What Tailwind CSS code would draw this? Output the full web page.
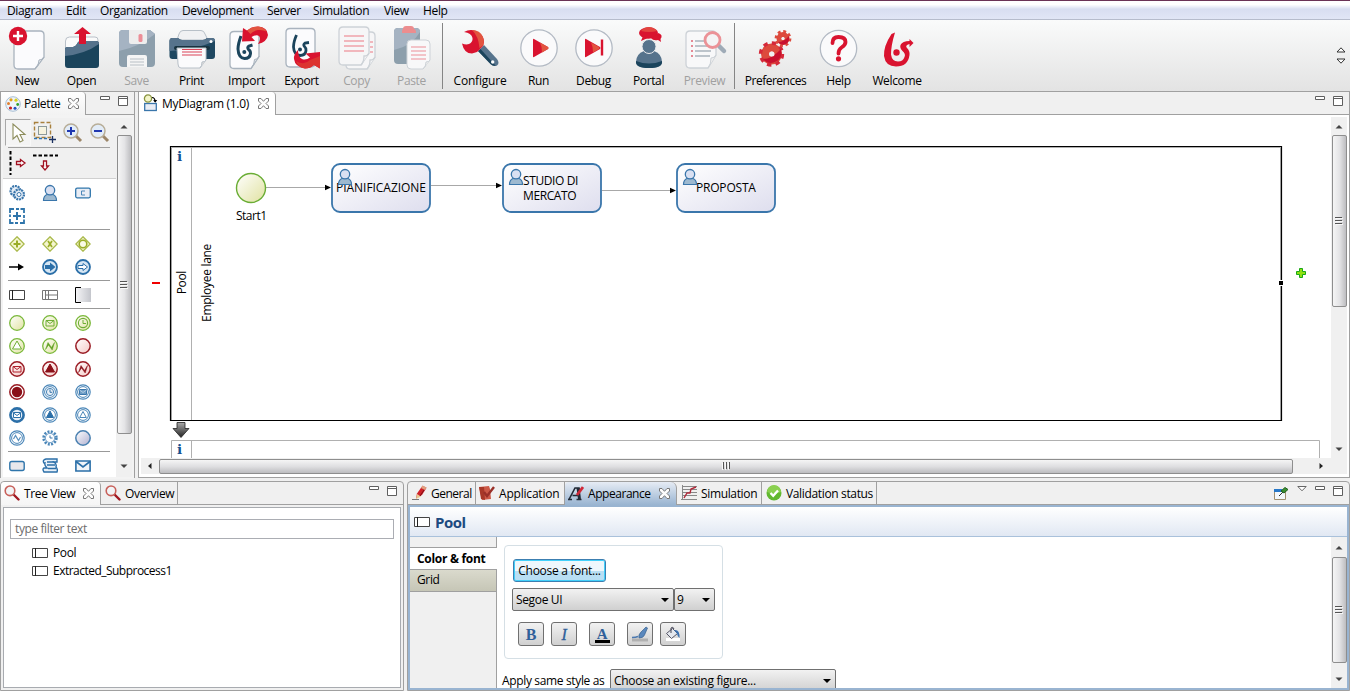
<!DOCTYPE html>
<html lang="en">
<head>
<meta charset="utf-8">
<title>MyDiagram (1.0)</title>
<script src="https://cdn.jsdelivr.net/npm/@tailwindcss/browser@4"></script>
</head>
<body class="w-[1350px] h-[691px] overflow-hidden bg-[#f0f0f0] text-black font-['Open_Sans','Noto_Sans',sans-serif] text-[12px] leading-4 tracking-[-0.35px] whitespace-nowrap">

<!-- shared symbols -->
<svg width="0" height="0" class="absolute">
  <defs>
    <linearGradient id="gTask" x1="0" y1="0" x2="1" y2="1"><stop offset="0" stop-color="#fff"/><stop offset="1" stop-color="#dedeee"/></linearGradient>
    <linearGradient id="gGreen" x1="0" y1="0" x2="1" y2="1"><stop offset="0" stop-color="#fff"/><stop offset="1" stop-color="#e0e2a0"/></linearGradient>
    <linearGradient id="gRed" x1="0" y1="0" x2="1" y2="1"><stop offset="0" stop-color="#fff"/><stop offset="1" stop-color="#f5c9c6"/></linearGradient>
    <linearGradient id="gBlue" x1="0" y1="0" x2="1" y2="1"><stop offset="0" stop-color="#fff"/><stop offset="1" stop-color="#b0b0d0"/></linearGradient>
    <linearGradient id="gGray" x1="0" y1="0" x2="1" y2="0"><stop offset="0" stop-color="#f4f4f6"/><stop offset="1" stop-color="#c4c6cc"/></linearGradient>
    <linearGradient id="gArrow" x1="0" y1="0" x2="0" y2="1"><stop offset="0" stop-color="#aaa"/><stop offset="1" stop-color="#222"/></linearGradient>
    <symbol id="close" viewBox="0 0 11 11"><path d="M.5 .5h2.500l2.500 2.800L8 .5h2.500V3L8 5.500 10.500 8v2.500H8L5.500 7.700 3 10.500H.5V8L3 5.500.5 3z" fill="#fdfdfd" stroke="#777"/></symbol>
    <symbol id="min" viewBox="0 0 10 4"><path d="M.5.5h9v3h-9z" fill="#fff" stroke="#5f5f5f"/></symbol>
    <symbol id="max" viewBox="0 0 10 10"><path d="M.5.5h9v9h-9zM.5 2.500h9" fill="#fff" stroke="#5f5f5f"/></symbol>
    <symbol id="mag" viewBox="0 0 16 16"><path d="M9.500 9.500l5 5" stroke="#a01822" stroke-width="2.400" stroke-linecap="round"/><circle cx="6" cy="5.800" r="4.800" fill="#f1f4f6" stroke="#c8605a" stroke-width="1.600"/></symbol>
    <symbol id="pool" viewBox="0 0 16 10"><path d="M.5.5h15v9H.5z" fill="#fff" stroke="#444"/><path d="M3.500 0v10" stroke="#222"/></symbol>
    <symbol id="user" viewBox="0 0 16 18"><path d="M1.500 16.500c0-3 1-5 3.500-6h6c2.500 1 3.500 3 3.500 6z" fill="#9db9d0" stroke="#3a76ab" stroke-width="1.200"/><circle cx="8" cy="6.200" r="4.700" fill="#d9e0f2" stroke="#3a76ab" stroke-width="1.300"/></symbol>
    <symbol id="up" viewBox="0 0 8 5"><path d="M.5 4.500L4 1l3.500 3.500z" fill="#444"/></symbol>
    <symbol id="down" viewBox="0 0 8 5"><path d="M.5.500L4 4 7.500.500z" fill="#444"/></symbol>
    <symbol id="grip" viewBox="0 0 8 8"><path d="M0 .5h7M0 3.500h7M0 6.500h7" stroke="#555"/><path d="M1 1.500h7M1 4.500h7M1 7.500h7" stroke="#fff" opacity=".8"/></symbol>
    <symbol id="caret" viewBox="0 0 8 4"><path d="M0 0h8L4 4z" fill="#000"/></symbol>
    <symbol id="env" viewBox="0 0 16 16"><path d="M4 5.500h8v5.500H4zM4 5.500l4 3 4-3" fill="none" stroke="currentColor"/></symbol>
    <symbol id="clk" viewBox="0 0 16 16"><circle cx="8" cy="8" r="4.600" fill="none" stroke="currentColor" stroke-width="1.100"/><path d="M8 5v3.500h3" fill="none" stroke="currentColor"/></symbol>
    <symbol id="tri" viewBox="0 0 16 16"><path d="M8 3l4.500 8h-9z" stroke="currentColor"/></symbol>
    <symbol id="zig" viewBox="0 0 16 16"><path d="M3.500 11.500l2.500-7 3.500 5 3-5-2.300 7.500L6.500 7z" fill="currentColor" stroke="currentColor" stroke-width=".5"/></symbol>
    <symbol id="ring" viewBox="0 0 16 16"><circle cx="8" cy="8" r="7.200" fill="#fff" stroke="#4a86b8" stroke-width="1.200"/><circle cx="8" cy="8" r="5.400" fill="none" stroke="#4a86b8" stroke-width="1"/></symbol>
    <symbol id="gc" viewBox="0 0 16 16"><circle cx="8" cy="8" r="7.300" fill="url(#gGreen)" stroke="#7ab83a" stroke-width="1.300"/></symbol>
    <symbol id="rc" viewBox="0 0 16 16"><circle cx="8" cy="8" r="7.200" fill="url(#gRed)" stroke="#9a1c24" stroke-width="1.500"/></symbol>
  </defs>
</svg>

<div class="flex flex-col w-full h-full">
  <!-- menu bar -->
  <div class="h-px bg-[#6b3356] shrink-0"></div>
  <nav class="h-[19px] shrink-0 flex items-center pl-[7px] pt-px bg-linear-to-b from-white from-20% via-[#d8def1] via-45% to-[#e1e6f6] border-b border-[#b6bccc]">
    <span class="w-[59px]">Diagram</span><span class="w-[34px]">Edit</span><span class="w-[82px]">Organization</span><span class="w-[85px]">Development</span><span class="w-[46px]">Server</span><span class="w-[71px]">Simulation</span><span class="w-[39px]">View</span><span>Help</span>
  </nav>

  <!-- toolbar -->
  <div class="h-[72px] shrink-0 flex items-stretch bg-linear-to-b from-[#fafbfb] to-[#e3e3e3] border-b border-[#a0a0a0]">
    <div class="w-[54px] flex flex-col items-center pt-[3px]">
      <svg class="w-[54px] h-[50px]" viewBox="0 23 54 50"><path d="M18 31h22q4 0 4 4v22l-9 12H18q-4 0-4-4V35q0-4 4-4z" fill="#fbfbfd" stroke="#a9b3be" stroke-width="1.300"/><path d="M44 57q-1 3-5 3 0 6-4 9z" fill="#e8eaed" stroke="#a9b3be"/><circle cx="18" cy="36" r="9.200" fill="#d9132f"/><path d="M18 31v10M13 36h10" stroke="#fff" stroke-width="2.400"/></svg>
      <span>New</span></div>
    <div class="w-[55px] flex flex-col items-center pt-[3px]">
      <svg class="w-[55px] h-[50px]" viewBox="54 23 55 50"><path d="M65.500 46v-5q0-4 4-4H95q3 0 3 3v10H65.500z" fill="#fafafa" stroke="#b9c0c8"/><path d="M65 49q0-2 3-2h5q2 0 4-3 1-3 4-3h15q3 0 3 3v21q0 3-3 3H68q-3 0-3-3z" fill="#1b445c"/><path d="M65 56V49q0-2 3-2h5q2 0 4-3 1-3 4-3h15q3 0 3 3-14 10-34 12z" fill="#56738c"/><path d="M79 44V34h-5l8.500-7 8.500 7h-5v10z" fill="#d9132f"/></svg>
      <span>Open</span></div>
    <div class="w-[55px] flex flex-col items-center pt-[3px] text-[#a0a0a0]">
      <svg class="w-[55px] h-[50px]" viewBox="109 23 55 50"><path d="M123 30h27l5 4v29q0 4-4 4h-28q-4 0-4-4V34q0-4 4-4z" fill="#8d9fac"/><path d="M119 51V34q0-4 4-4h27l5 4q-16 13-36 17z" fill="#a5b3c2"/><path d="M129 30h18v12q0 2-2 2h-14q-2 0-2-2z" fill="#eee"/><rect x="138.500" y="34" width="4" height="8" rx="1.500" fill="#ec8d97"/><path d="M127 67V57q0-2 2-2h16q2 0 2 2v10z" fill="#f5f5f5"/><path d="M130 59h14M130 62h14M130 65h14" stroke="#b8bfc5"/></svg>
      <span>Save</span></div>
    <div class="w-[55px] flex flex-col items-center pt-[3px]">
      <svg class="w-[55px] h-[50px]" viewBox="164 23 55 50"><path d="M177 40l2-6q1-3.500 4-3.500h18q3 0 4 3.500l3 6z" fill="#f0f1f3" stroke="#b8c0c8"/><path d="M169.500 41q0-3 3-3H178q2 2 4 2h21q2 0 4-2h5q3 0 3 3v15q0 3-3 3h-39.500q-3 0-3-3z" fill="#1f4861"/><path d="M169.500 51V41q0-3 3-3H178q2 2 4 2h21q2 0 4-2h5q3 0 3 3-20 9-45.500 10z" fill="#56738c"/><rect x="174" y="46" width="36" height="4" rx="2" fill="#17323f"/><circle cx="211" cy="41.500" r="1.500" fill="#fff"/><path d="M177 48h29v12l-6 8h-19q-3 0-3-4z" fill="#fbfbfc" stroke="#b8c0c8"/><path d="M206 60q-1 2-4 2 0 4-2 6" fill="#ddd" stroke="#b8c0c8"/><path d="M182 49.500h20M182 52h20M182 55h20" stroke="#dc4357" stroke-width="1.100"/></svg>
      <span>Print</span></div>
    <div class="w-[55px] flex flex-col items-center pt-[3px]">
      <svg class="w-[55px] h-[50px]" viewBox="219 23 55 50"><path d="M234 31.500h21q4 0 4 4v21l-8 12h-17q-4 0-4-4v-29q0-4 4-4z" fill="#fbfbfd" stroke="#a9b3be" stroke-width="1.300"/><path d="M259 56.500q-1 3-4.500 3 0 6-3.500 9z" fill="#e8eaed" stroke="#a9b3be"/><path d="M241 36q-3 8-3 13 .5 9 6.500 9.500 5.500 0 6-5 .2-2.500-2-4-1.500-2 .5-3.500l3.500-1" fill="none" stroke="#1b445c" stroke-width="3"/><circle cx="244.300" cy="52" r="2" fill="#1b445c"/><path d="M243 28l-1 13.500 13-.5-3.500-4q5-3 7.500-1 2.500 3-1 8 9-2 10-9-.5-8-10-8.500-6 0-11 4z" fill="#d9132f"/><path d="M247 30.500q5-4 11-4 6 .5 8.500 5-4-2-8.500-1.500-5 1-7.500 4z" fill="#e2543f"/></svg>
      <span class="tracking-[-0.2px]">Import</span></div>
    <div class="w-[55px] flex flex-col items-center pt-[3px]">
      <svg class="w-[55px] h-[50px]" viewBox="274 23 55 50"><path d="M290 28.500h21q4 0 4 4V63q0 4-4 4h-21q-4 0-4-4V32.500q0-4 4-4z" fill="#fbfbfd" stroke="#a9b3be" stroke-width="1.300"/><path d="M296.500 35q-3 7-3 12 .5 8 6.500 8.500 5.500 0 6-5 .2-2.500-1.500-4-1.500-2 .5-3.500l4-.5" fill="none" stroke="#1b445c" stroke-width="2.800"/><circle cx="300" cy="49.500" r="2" fill="#1b445c"/><path d="M298 50q-4.500 4-4 9 1 8 11 9.500 5 0 9-3.500l6 3.500V52l-14.500 1.500 4.500 4q-4 3-8 1.500-4-2-4-9z" fill="#d9132f"/><path d="M296 61q8 5 14-1l10-4v12.500l-6-3.500q-4 3.500-9 3.500-7-1-9-7.500z" fill="#dc3430"/></svg>
      <span>Export</span></div>
    <div class="w-[55px] flex flex-col items-center pt-[3px] text-[#a0a0a0]">
      <svg class="w-[55px] h-[50px]" viewBox="329 23 55 50"><g stroke="#cdd2d7" stroke-width="1.300" fill="#f6f6f7"><path d="M350 32h21q4 0 4 4v21l-8 12h-17q-4 0-4-4V36z"/><path d="M343 27h22q4 0 4 4v22l-8 12h-18q-4 0-4-4V31q0-4 4-4z"/><path d="M369 53q-1 3-5 3 0 6-3 9M375 57q-1 3-5 3 0 6-3 9"/></g><path d="M344 36h20M344 41h20M344 46h20M344 51h20M370 42h3M370 47h3M370 52h3" stroke="#efa3ab" stroke-width="1.400"/></svg>
      <span>Copy</span></div>
    <div class="w-[55px] flex flex-col items-center pt-[3px] text-[#a0a0a0]">
      <svg class="w-[55px] h-[50px]" viewBox="384 23 55 50"><rect x="394" y="28" width="26" height="36" rx="4" fill="#8d9fac"/><path d="M394 50V32q0-4 4-4h18q4 0 4 4-8 14-26 18z" fill="#a5b3c2"/><path d="M403 29q0-3 3-3h5q3 0 3 3 2 0 2 4h-14q0-4 1-4z" fill="#ec8d8f"/><path d="M411 40h15q4 0 4 4v16l-7 9h-12q-4 0-4-4V44q0-4 4-4z" fill="#f8f8f9" stroke="#cdd2d7"/><path d="M430 60q-1 2-4 2 0 5-3 7" fill="#eee" stroke="#cdd2d7"/><path d="M411 47h15M411 51h15M411 55h15M411 59h15" stroke="#ec8d97" stroke-width="1.200"/></svg>
      <span>Paste</span></div>
    <div class="w-px ml-[3px] my-[3px] mb-[2px] mr-[5px] bg-[#858585]"></div>
    <div class="w-[64px] flex flex-col items-center pt-[3px]">
      <svg class="w-[64px] h-[50px]" viewBox="448 23 64 50"><path d="M478 51l6-6 13 14q3 4 0 6.500-3 1.500-6-1z" fill="#56738c"/><path d="M478 51l2.500-2 15 16.500q-2.500 1-5-1.500z" fill="#1b445c"/><circle cx="492.700" cy="62" r="1.700" fill="#fff"/><path d="M464 32q6-3.500 12-1 8 4 8 11l-1 4-6 6-5 1.500q-8 0-10-10 4 1.500 7 .5 4-2 3.500-6-1-5-8.500-6z" fill="#d9132f"/><path d="M472 30q8 0 11 7 1.500 4 .5 8l-4 3q-1-12-7.500-18z" fill="#e2543f"/></svg>
      <span class="tracking-[-0.2px]">Configure</span></div>
    <div class="w-[53px] flex flex-col items-center pt-[3px]">
      <svg class="w-[53px] h-[50px]" viewBox="512 23 53 50"><circle cx="539" cy="48" r="18.200" fill="#fafafb" stroke="#b3bac4" stroke-width="1.300"/><path d="M533 39.500q0-1 1-.5l14 8q1 1 0 2l-14 8q-1 .5-1-.5z" fill="#d9132f"/><path d="M540 42.500l8 4.500q1 1 0 2l-6 3.500q0-6-2-10z" fill="#e2543f"/></svg>
      <span>Run</span></div>
    <div class="w-[57px] flex flex-col items-center pt-[3px]">
      <svg class="w-[57px] h-[50px]" viewBox="565 23 57 50"><circle cx="594" cy="48" r="18.200" fill="#fafafb" stroke="#b3bac4" stroke-width="1.300"/><path d="M585 39.500q0-1 1-.5l14 8q1 1 0 2l-14 8q-1 .5-1-.5z" fill="#d9132f"/><path d="M591 42.500l8 4.500q1 1 0 2l-6 3.500q0-6-2-10z" fill="#e2543f"/><path d="M602 39.500v16" stroke="#d9132f" stroke-width="2.400"/></svg>
      <span>Debug</span></div>
    <div class="w-[53px] flex flex-col items-center pt-[3px]">
      <svg class="w-[53px] h-[50px]" viewBox="622 23 53 50"><path d="M636 62q0-8 8-11h10q8 3 8 11 0 6-13 6t-13-6z" fill="#56738c"/><path d="M636 61q13 5 26 0 1 7-13 7t-13-7z" fill="#1b445c"/><circle cx="649" cy="46.500" r="7" fill="#56738c" stroke="#e9eaec"/><ellipse cx="648.500" cy="33" rx="9.500" ry="5.800" fill="#d9132f"/><path d="M643 36l-2 5 7-3z" fill="#d9132f"/><path d="M651 38q2 3 7 2l3 2-.5-3q3-4-2-6z" fill="#d9132f"/><path d="M641 31q3-4 8-4t8 4q-8 2-16 0z" fill="#e2443f"/></svg>
      <span>Portal</span></div>
    <div class="w-[59px] flex flex-col items-center pt-[3px] text-[#a0a0a0]">
      <svg class="w-[59px] h-[50px]" viewBox="675 23 59 50"><path d="M690 31h22q4 0 4 4v20l-8 13h-18q-4 0-4-4V35q0-4 4-4z" fill="#f8f8f9" stroke="#cdd2d7" stroke-width="1.300"/><path d="M716 55q-1 3-5 3 0 7-3 10" fill="#eee" stroke="#cdd2d7"/><path d="M695 41h12M695 46h14M695 51h16M695 56h15" stroke="#a9b2bc" stroke-width="1.700"/><path d="M691 41h2M691 46h2M691 51h2M691 56h2" stroke="#e58a95" stroke-width="2"/><path d="M719 46l5 5" stroke="#9fabb7" stroke-width="4.500" stroke-linecap="round"/><circle cx="712.500" cy="40" r="7.500" fill="#f4f4f5" stroke="#eb9297" stroke-width="2.800"/></svg>
      <span>Preview</span></div>
    <div class="w-px my-[3px] mb-[2px] bg-[#858585]"></div>
    <div class="w-[81px] flex flex-col items-center pt-[3px]">
      <svg class="w-[81px] h-[50px]" viewBox="735 23 81 50"><circle cx="771.500" cy="54" r="6.500" fill="none" stroke="#dd4a3d" stroke-width="8"/><circle cx="771.500" cy="54" r="11" fill="none" stroke="#d5293a" stroke-width="3.400" stroke-dasharray="4.400 4.240"/><path d="M763 59q9 0 18-10 2 8-4 12-8 5-14-2z" fill="#c8102e"/><circle cx="772" cy="54" r="2.500" fill="#f1f1f1"/><circle cx="783" cy="38.500" r="4" fill="none" stroke="#dd4a3d" stroke-width="5"/><circle cx="783" cy="38.500" r="7" fill="none" stroke="#dd4a3d" stroke-width="2.800" stroke-dasharray="2.850 2.650"/><path d="M778 42q6 0 11-6 1 5-3 8-5 2-8-2z" fill="#c8102e"/><circle cx="783" cy="38.500" r="1.500" fill="#f1f1f1"/></svg>
      <span class="tracking-[-0.5px]">Preferences</span></div>
    <div class="w-[45px] flex flex-col items-center pt-[3px]">
      <svg class="w-[45px] h-[50px]" viewBox="816 23 45 50"><circle cx="838.500" cy="48.500" r="18.200" fill="#fafafb" stroke="#b3bac4" stroke-width="1.300"/><path d="M832.500 43q0-6 6-6 7 0 7 5 0 3-4 5.500-3 2-3 6" fill="none" stroke="#d9132f" stroke-width="3.800" stroke-linecap="round"/><circle cx="838.500" cy="58.800" r="2.600" fill="#d9132f"/></svg>
      <span>Help</span></div>
    <div class="w-[72px] flex flex-col items-center pt-[3px]">
      <svg class="w-[72px] h-[50px]" viewBox="861 23 72 50"><path d="M895 32.500l-3.500 1.500q-8 12-7.500 22 1.500 10.500 12 10.500 12 0 13.500-11.500.5-4-2.500-7-2-2 1-3.500l1.500-.5v3l4-4-4-4v2q-7 0-9 4-1 3 2 6 3.500 3 2 6-1.500 4.500-6.500 4.500-6 0-7-7 0-9 4-22z" fill="#d9132f"/><circle cx="896.500" cy="52.500" r="3.200" fill="#d9132f"/></svg>
      <span>Welcome</span></div>
    <div class="flex-1 flex flex-col items-end justify-center gap-[5px] pr-1">
      <svg width="10" height="6"><path d="M1 5L5 .8 9 5z" fill="#fff" stroke="#333"/></svg>
      <svg width="10" height="6"><path d="M1 1L5 5.200 9 1z" fill="#fff" stroke="#333"/></svg>
    </div>
  </div>

  <!-- palette + editor -->
  <div class="h-[386px] shrink-0 flex gap-[3px]">
    <section class="w-[135px] flex flex-col border-x border-b border-[#a0a0a0]">
      <div class="h-[23px] shrink-0 flex">
        <div class="w-[85px] flex items-center pl-1 border-r border-[#a0a0a0] rounded-tr-[4px] bg-linear-to-b from-white to-[#f2f2f2]">
          <svg width="16" height="16"><circle cx="8" cy="8" r="7.300" fill="#eef4fb" stroke="#a9bfd4"/><circle cx="6" cy="3.800" r="1.600" fill="#e0a020"/><circle cx="11" cy="4.200" r="1.600" fill="#d8d020"/><circle cx="3.500" cy="7.500" r="1.500" fill="#e08030"/><circle cx="12.700" cy="8.500" r="1.400" fill="#30a030"/><circle cx="5.500" cy="12" r="1.600" fill="#c82020"/><circle cx="10" cy="12.300" r="1.500" fill="#2050c0"/></svg>
          <span class="ml-[3px] w-[44px]">Palette</span><svg class="size-[11px] -mt-px"><use href="#close"/></svg>
        </div>
        <div class="flex-1 flex justify-end gap-2 pt-[4px] pr-[6px] border-b border-[#a0a0a0]"><svg width="10" height="4"><use href="#min"/></svg><svg width="10" height="10"><use href="#max"/></svg></div>
      </div>
      <div class="flex-1 flex pl-[2px] pt-[3px] pr-[2px] pb-[2px] bg-[#f3f3f3]">
        <div class="flex-1 flex flex-col bg-white">
          <div class="h-[61px] shrink-0 bg-[#f0f0f0] border-b border-[#d0d0d0] flex flex-col">
            <div class="flex h-[29px] items-center pl-[2px]">
              <div class="w-[26px] h-[27px] border border-[#f8f8f8] border-l-[#a8a8a8] border-t-[#a8a8a8] bg-[#f4f4f4] flex justify-center items-center"><svg class="ml-[2px]" width="16" height="20"><path d="M2 1v15l4-3.500 3 6.500 3-1.500-3-6h5z" fill="#fff" stroke="#8d8d5c" stroke-width="1.100"/></svg></div>
              <svg class="ml-[2px]" width="26" height="24"><path d="M1.500 1.500h16v15h-16z" fill="none" stroke="#a8803c" stroke-width="1.400" stroke-dasharray="4 2"/><path d="M1 17.500h13" stroke="#2f75b5" stroke-width="1.600" stroke-dasharray="3 2"/><rect x="5.500" y="5.500" width="8" height="8" fill="#f6f3df" stroke="#8d9a9a"/><path d="M19.500 15v7M16 18.500h7" stroke="#1a3060" stroke-width="1.300"/></svg>
              <svg class="ml-1" width="20" height="20"><path d="M12 12l6 6" stroke="#9c8668" stroke-width="3"/><circle cx="8" cy="8" r="7" fill="#e2ecf8" stroke="#b8ae98" stroke-width="1.500"/><path d="M8 4v8M4 8h8" stroke="#2038b0" stroke-width="2"/></svg>
              <svg class="ml-[7px]" width="20" height="20"><path d="M12 12l6 6" stroke="#9c8668" stroke-width="3"/><circle cx="8" cy="8" r="7" fill="#e2ecf8" stroke="#b8ae98" stroke-width="1.500"/><path d="M4 8h8" stroke="#2038b0" stroke-width="2"/></svg>
            </div>
            <div class="h-px w-[102px] ml-[5px] bg-[#a0a0a0]"></div>
            <div class="flex pl-[5px] pt-[3px] gap-1">
              <svg width="20" height="26"><path d="M2.500 0v24" stroke="#000" stroke-width="2" stroke-dasharray="3.500 2"/><path d="M8.500 10.500h4v-2l4.500 3.500-4.500 3.500v-2h-4z" fill="#fff" stroke="#a01020" stroke-width="1.300"/></svg>
              <svg width="28" height="26"><path d="M1 4.500h25" stroke="#000" stroke-width="2" stroke-dasharray="3.500 2"/><path d="M11.500 10v5h-2l3.500 4 3.500-4h-2v-5z" fill="#fff" stroke="#a01020" stroke-width="1.300"/></svg>
            </div>
          </div>
          <div class="flex-1 pl-[5px] pt-[2px] flex flex-col">
            <div class="grid grid-cols-[33px_33px_33px] auto-rows-[23px] items-center pl-px">
              <svg width="18" height="18"><circle cx="6.500" cy="7" r="5" fill="#e5edf6" stroke="#3a76ab" stroke-width="2.200" stroke-dasharray="2 .8"/><circle cx="10" cy="10.500" r="5" fill="#e5edf6" stroke="#3a76ab" stroke-width="2.200" stroke-dasharray="2 .8"/><circle cx="10" cy="10.500" r="2" fill="#fff" stroke="#3a76ab"/></svg>
              <svg width="16" height="18"><use href="#user"/></svg>
              <svg width="16" height="16"><rect x=".7" y="3.200" width="14.600" height="9.600" rx="1.500" fill="#e9edf5" stroke="#2f75ab" stroke-width="1.300"/><path d="M10 6H6.500v4H10" fill="none" stroke="#4a86b8"/></svg>
              <svg width="16" height="16"><path d="M1 5V1h4M7 1h3M11.500 1H15v4M15 7v3M15 11.500V15h-4M9 15H6M4.500 15H1v-4M1 9V6.500" fill="none" stroke="#2f75ab" stroke-width="1.800"/><path d="M8 4v8M4 8h8" stroke="#2f75ab" stroke-width="2"/></svg>
            </div>
            <div class="h-px w-[102px] bg-[#999] mt-[2px] mb-[2px]"></div>
            <div class="grid grid-cols-[33px_33px_33px] auto-rows-[23px] items-center pl-px">
              <svg width="16" height="16"><path d="M8 .8L15.200 8 8 15.200.8 8z" fill="#f5f6d0" stroke="#a9b94a" stroke-width="1.300"/><path d="M8 4.500v7M4.500 8h7" stroke="#9aad28" stroke-width="2"/></svg>
              <svg width="16" height="16"><path d="M8 .8L15.200 8 8 15.200.8 8z" fill="#f5f6d0" stroke="#a9b94a" stroke-width="1.300"/><path d="M6 5l4 6M10 5l-4 6" stroke="#9aad28" stroke-width="1.700"/></svg>
              <svg width="16" height="16"><path d="M8 .8L15.200 8 8 15.200.8 8z" fill="#f5f6d0" stroke="#a9b94a" stroke-width="1.300"/><circle cx="8" cy="8" r="3.800" fill="#fafbe6" stroke="#9aad28" stroke-width="1.600"/></svg>
              <svg width="16" height="16"><path d="M0 8h10" stroke="#000" stroke-width="1.500"/><path d="M9 4.500l6 3.500-6 3.500z"/></svg>
              <svg width="16" height="16"><circle cx="8" cy="8" r="7" fill="#d6e6f3" stroke="#2b6fa8" stroke-width="1.800"/><path d="M3 6h5V3.500L13.500 8 8 12.500V10H3z" fill="#2b6fa8"/></svg>
              <svg width="16" height="16"><circle cx="8" cy="8" r="7" fill="#d6e6f3" stroke="#2b6fa8" stroke-width="1.800"/><path d="M3 6.500h5V4.500L12.500 8 8 11.500V9.500H3z" fill="#fff" stroke="#2b6fa8"/></svg>
            </div>
            <div class="h-px w-[102px] bg-[#999] mt-[2px] mb-[2px]"></div>
            <div class="grid grid-cols-[33px_33px_33px] auto-rows-[23px] items-center pl-px">
              <svg width="16" height="10"><use href="#pool"/></svg>
              <svg width="16" height="10"><path d="M.5.5h15v9H.5zM3.500 0v10M6.500 0v10M3.500 5h12" fill="none" stroke="#777"/></svg>
              <svg width="16" height="16"><path d="M1 1h15v14H1z" fill="url(#gGray)"/><path d="M6 .5H.5v15H6" fill="none" stroke="#000"/></svg>
            </div>
            <div class="h-px w-[102px] bg-[#999] mt-[2px] mb-[2px]"></div>
            <div class="grid grid-cols-[33px_33px_33px] auto-rows-[23px] items-center pl-px">
              <svg width="16" height="16"><use href="#gc"/></svg>
              <svg width="16" height="16" class="text-[#6fae35]"><use href="#gc"/><use href="#env"/></svg>
              <svg width="16" height="16" class="text-[#6fae35]"><use href="#gc"/><use href="#clk"/></svg>
              <svg width="16" height="16" class="text-[#6fae35]"><use href="#gc"/><use href="#tri" fill="#fff"/></svg>
              <svg width="16" height="16" class="text-[#5ea020]"><use href="#gc"/><use href="#zig"/></svg>
              <svg width="16" height="16"><use href="#rc"/></svg>
              <svg width="16" height="16" class="text-[#b0202c]"><use href="#rc"/><use href="#env"/></svg>
              <svg width="16" height="16" class="text-[#8a1018]"><use href="#rc"/><use href="#tri" fill="#8a1018"/></svg>
              <svg width="16" height="16" class="text-[#8a1018]"><use href="#rc"/><use href="#zig"/></svg>
              <svg width="16" height="16"><circle cx="8" cy="8" r="7.200" fill="#fff" stroke="#9a1c24" stroke-width="1.500"/><circle cx="8" cy="8" r="5.200" fill="#8a1018"/></svg>
              <svg width="16" height="16" class="text-[#4a86b8]"><use href="#ring"/><circle cx="8" cy="8" r="3.600" fill="#e6eef6" stroke="#4a86b8"/><path d="M8 5.500v2.800h2.200" fill="none" stroke="#3a76ab"/></svg>
              <svg width="16" height="16"><use href="#ring"/><path d="M4.500 5.500h7v5h-7z" fill="#6f9ec6" stroke="#3a76ab"/><path d="M4.500 6l3.500 2.500L11.500 6" fill="none" stroke="#cfe0ee" stroke-width=".7"/></svg>
              <svg width="16" height="16" class="text-[#2b6fa8]"><circle cx="8" cy="8" r="6.600" fill="#e6eef6" stroke="#2b6fa8" stroke-width="2.600"/><path d="M4.500 5.500h7v5h-7z" fill="#fff" stroke="#2b6fa8"/><path d="M4.500 6l3.500 2.500L11.500 6" fill="none" stroke="#2b6fa8"/></svg>
              <svg width="16" height="16" class="text-[#2b6fa8]"><use href="#ring"/><path d="M8 4l3.500 6.500h-7z" fill="#2b6fa8" stroke="#2b6fa8"/></svg>
              <svg width="16" height="16" class="text-[#4a86b8]"><use href="#ring"/><path d="M8 4.500l3.300 6H4.700z" fill="#fff" stroke="#4a86b8"/></svg>
              <svg width="16" height="16"><use href="#ring"/><path d="M4.500 9l2-3.500 3 5 2-3.500" fill="none" stroke="#5a90be" stroke-width="1.200"/></svg>
              <svg width="16" height="16"><circle cx="8" cy="8" r="6.200" fill="#f3f7fb" stroke="#4a86b8" stroke-width="3" stroke-dasharray="1.900 1.350"/><circle cx="8" cy="8" r="4.600" fill="#fff" stroke="#7fa9cf"/><path d="M8 5.500V8h2.500" fill="none" stroke="#3a76ab"/></svg>
              <svg width="16" height="16"><circle cx="8" cy="8" r="7.200" fill="url(#gBlue)" stroke="#4a80b0" stroke-width="1.500"/></svg>
            </div>
            <div class="h-px w-[102px] bg-[#999] mt-[2px] mb-[3px]"></div>
            <div class="grid grid-cols-[33px_33px_33px] auto-rows-[22px] items-center pl-px">
              <svg width="16" height="16"><rect x=".8" y="3.500" width="14.400" height="9" rx="2" fill="#e8e8ec" stroke="#2f75ab" stroke-width="1.400"/></svg>
              <svg width="16" height="16"><path d="M4 1h11v3h-3q3 2 2 5 2 2 1 5H2q-2-3 0-4h3Q2 7 3 5H2Q0 2 4 1z" fill="#e8f0f8" stroke="#2b6fa8" stroke-width="1.400"/><path d="M5 4h7M5 7h8M6 10.500h8" stroke="#2b6fa8" stroke-width="1.400"/></svg>
              <svg width="16" height="16"><path d="M.9 3h14.200v10H.9z" fill="#f1f5f9" stroke="#2b6fa8" stroke-width="1.600"/><path d="M1 3.500l7 5.500 7-5.500" fill="none" stroke="#2b6fa8" stroke-width="1.600"/></svg>
            </div>
          </div>
        </div>
        <div class="w-4 flex flex-col items-center bg-[#f0f0f0]">
          <div class="h-[17px] flex items-center"><svg width="8" height="5"><use href="#up"/></svg></div>
          <div class="w-[15px] h-[299px] border border-[#8e8e8e] rounded-[2px] bg-linear-to-r from-[#f5f5f5] via-[#e4e4e6] to-[#bdbdc0] flex items-center justify-center"><svg width="8" height="8"><use href="#grip"/></svg></div>
          <div class="flex-1"></div>
          <div class="h-[21px] flex items-center"><svg width="8" height="5"><use href="#down"/></svg></div>
        </div>
      </div>
    </section>

    <section class="flex-1 flex flex-col border-x border-b border-[#a0a0a0] bg-white">
      <div class="h-[23px] shrink-0 flex bg-[#f0f0f0]">
        <div class="w-[137px] flex items-center pl-1 bg-white border-r border-[#a0a0a0] rounded-tr-[4px]">
          <svg class="-mt-px" width="16" height="18"><rect x="1.700" y="9.500" width="11.600" height="7" fill="#e9edf5" stroke="#3a76ab" stroke-width="1.300"/><circle cx="5" cy="4.500" r="3.600" fill="#f3f5c8" stroke="#8a9440" stroke-width="1.300"/><path d="M9 3.500q3 0 3 4" fill="none" stroke="#000" stroke-width="1.200"/><path d="M10.200 6h4l-2 2.700z"/></svg>
          <span class="ml-[3px] w-[96px] tracking-[-0.3px]">MyDiagram (1.0)</span><svg class="size-[11px] -mt-px"><use href="#close"/></svg>
        </div>
        <div class="flex-1 flex justify-end gap-2 pt-[4px] pr-[6px] border-b border-[#a0a0a0]"><svg width="10" height="4"><use href="#min"/></svg><svg width="10" height="10"><use href="#max"/></svg></div>
      </div>
      <div class="flex-1 flex flex-col pt-[2px] pl-[2px] pr-[2px] pb-[2px]">
        <div class="h-[341px] flex">
          <!-- diagram canvas, nodes are freely placed -->
          <div class="relative flex-1 overflow-hidden">
            <svg class="absolute inset-0" width="1190" height="341" viewBox="141 117 1190 341">
              <path d="M171.500 420V147.500h1109V420M191.500 148v272M171.500 458v-17.500h1148V458M191.500 441v17" fill="none" stroke="#b0b0b0"/>
              <path d="M170.500 146.500h1111v274h-1111z" fill="none" stroke="#000" stroke-width="1.200"/>
              <path d="M266 187.500h61M431 185.500h66M602 190.500h68" stroke="#a8a8a8"/>
              <path d="M325 184.800l6 2.700-6 2.700zM496 182.800l6 2.700-6 2.700zM670 187.800l6 2.700-6 2.700z"/>
              <circle cx="251" cy="188" r="14.500" fill="url(#gGreen)" stroke="#6aad35" stroke-width="1.400"/>
              <g fill="url(#gTask)" stroke="#3a76ab" stroke-width="1.800">
                <rect x="332" y="164" width="98" height="48" rx="8"/>
                <rect x="503" y="164" width="98" height="48" rx="8"/>
                <rect x="677" y="164" width="98" height="48" rx="8"/>
              </g>
              <path d="M177 422.500h8v6h4l-8 9-8-9h4z" fill="url(#gArrow)" stroke="#222" stroke-width=".8"/>
              <path d="M152 283h8" stroke="#f00000" stroke-width="2"/>
              <path d="M1299.500 268.500h3v3h3v3h-3v3h-3v-3h-3v-3h3z" fill="#8fe010" stroke="#18a818"/>
              <path d="M1278 280h6v6h-6z" fill="#fff"/><path d="M1279 281h4v4h-4z"/>
            </svg>
            <b class="absolute left-[36px] top-[31px] font-['DejaVu_Serif'] text-[13.500px] text-[#15508f]">i</b>
            <b class="absolute left-[36px] top-[324px] font-['DejaVu_Serif'] text-[13.500px] text-[#15508f]">i</b>
            <span class="absolute left-[33px] top-[154px] [writing-mode:vertical-rl] rotate-180">Pool</span>
            <span class="absolute left-[58px] top-[127px] [writing-mode:vertical-rl] rotate-180 tracking-[-0.3px]">Employee lane</span>
            <span class="absolute left-[95px] top-[91px] tracking-[-0.5px]">Start1</span>
            <div class="absolute left-[190px] top-[46px] w-[100px] h-[50px] flex items-center justify-center"><span class="tracking-[-0.05px]">PIANIFICAZIONE</span><svg class="absolute left-[6px] top-[5px]" width="16" height="18"><use href="#user"/></svg></div>
            <div class="absolute left-[361px] top-[46px] w-[100px] h-[50px] flex items-center pl-[21px]"><span class="leading-[15px] tracking-[-0.4px]">STUDIO DI<br>MERCATO</span><svg class="absolute left-[6px] top-[5px]" width="16" height="18"><use href="#user"/></svg></div>
            <div class="absolute left-[535px] top-[46px] w-[100px] h-[50px] flex items-center pl-[20px]"><span class="tracking-[-0.2px]">PROPOSTA</span><svg class="absolute left-[6px] top-[5px]" width="16" height="18"><use href="#user"/></svg></div>
          </div>
          <div class="w-4 flex flex-col items-center bg-[#f0f0f0]">
            <div class="h-[18px] flex items-center"><svg width="8" height="5"><use href="#up"/></svg></div>
            <div class="w-[15px] h-[172px] border border-[#8e8e8e] rounded-[2px] bg-linear-to-r from-[#f5f5f5] via-[#e4e4e6] to-[#bdbdc0] flex items-center justify-center"><svg width="8" height="8"><use href="#grip"/></svg></div>
            <div class="flex-1"></div>
            <div class="h-[17px] flex items-center"><svg width="8" height="5"><use href="#down"/></svg></div>
          </div>
        </div>
        <div class="flex h-4 bg-[#f0f0f0] items-center">
          <svg class="ml-[6px] mr-[7px]" width="5" height="8"><path d="M4.500 1L1 4l3.500 3z" fill="#222"/></svg>
          <div class="w-[1134px] h-[15px] border border-[#8e8e8e] rounded-[2px] bg-linear-to-b from-[#f5f5f5] via-[#dfdfe1] to-[#bdbdc0] flex items-center justify-center"><svg width="8" height="8" class="rotate-90"><use href="#grip"/></svg></div>
          <svg class="ml-[26px]" width="5" height="8"><path d="M.5 1L4 4 .5 7z" fill="#222"/></svg>
        </div>
      </div>
    </section>
  </div>

  <!-- tree view + properties -->
  <div class="flex-1 flex gap-[3px] pt-[3px]">
    <section class="w-[404px] flex flex-col border border-[#a0a0a0] rounded-t-[4px]">
      <div class="h-[23px] shrink-0 flex">
        <div class="w-[100px] flex items-center pl-[3px] bg-linear-to-b from-white to-[#f5f5f5] border-r border-[#a0a0a0] rounded-t-[4px]"><svg class="-mt-px" width="16" height="16"><use href="#mag"/></svg><span class="ml-1 w-[59px] tracking-[-0.35px]">Tree View</span><svg class="size-[11px] -mt-px"><use href="#close"/></svg></div>
        <div class="w-[77px] flex items-center pl-1 border-r border-b border-[#a0a0a0]"><svg class="-mt-px" width="16" height="16"><use href="#mag"/></svg><span class="ml-1 mt-px">Overview</span></div>
        <div class="flex-1 flex justify-end gap-2 pt-[4px] pr-[6px] border-b border-[#a0a0a0]"><svg width="10" height="4"><use href="#min"/></svg><svg width="10" height="10"><use href="#max"/></svg></div>
      </div>
      <div class="flex-1 mt-[2px] mx-[2px] mb-[2px] border border-[#a8abb0] bg-white px-[6px] pt-[11px] flex flex-col">
        <div class="w-[384px] h-5 border border-[#abadb3] px-1 flex items-center text-[#6d6d6d] tracking-[-0.4px]">type filter text</div>
        <div class="h-[18px] mt-[5px] ml-[22px] flex items-center gap-[5px]"><svg width="16" height="10"><use href="#pool"/></svg>Pool</div>
        <div class="h-[18px] ml-[22px] flex items-center gap-[5px] tracking-[-0.52px]"><svg width="16" height="10"><use href="#pool"/></svg>Extracted_Subprocess1</div>
      </div>
    </section>

    <section class="flex-1 flex flex-col border border-[#a0a0a0] rounded-t-[4px]">
      <div class="h-[23px] shrink-0 flex">
        <div class="w-[68px] flex items-center pl-1 border-r border-b border-[#a0a0a0]"><svg width="16" height="16"><path d="M0 14.500h7" stroke="#777"/><path d="M4 13.500l1-5L10.500.8l4 2L10 10z" fill="#d02028"/><path d="M4 14l1-5 4 2.500z" fill="#e8c890"/><path d="M10.500.5l4 2-1.500 2.500L9 3z" fill="#dfa080"/><path d="M12 5l-4 6" stroke="#7a1018"/></svg><span class="ml-[3px] mt-px tracking-[-0.5px]">General</span></div>
        <div class="w-[89px] flex items-center pl-[3px] border-r border-b border-[#a0a0a0]"><svg width="17" height="16"><path d="M0 2l10-1 1 3 1 10-9 1z" fill="#cc5a48"/><path d="M0 2l5 0 1 13-4-1z" fill="#a83828"/><path d="M5 7l3 4 7-9" fill="none" stroke="#9a3028" stroke-width="2.400"/></svg><span class="ml-[3px] mt-px tracking-[-0.2px]">Application</span></div>
        <div class="w-[112px] flex items-center pl-[3px] border-r border-[#a0a0a0] rounded-tl-[4px] rounded-tr-[6px] bg-linear-to-b from-[#e6ecf4] to-[#99b4d1]"><svg width="16" height="16"><path d="M1 13.500L7 2h4l1 11.500M4.500 9.500h7" fill="none" stroke="#222a36" stroke-width="1.600"/><path d="M8.500 2h3l1 11H10z" fill="#222a36"/><path d="M0 13.500h4M8.500 13.500h5" stroke="#222a36" stroke-width="1.500"/><path d="M9 9l6-8" stroke="#d02838" stroke-width="2.800"/></svg><span class="ml-[4px] w-[71px] tracking-[-0.45px]">Appearance</span><svg class="size-[11px] -mt-px"><use href="#close"/></svg></div>
        <div class="w-[85px] flex items-center pl-[4px] border-r border-b border-[#a0a0a0]"><svg width="16" height="16"><path d="M2 1.500h14M2 4.500h14M2 7.500h14M2 10.500h14M1.500 0v15M0 14.500h16" stroke="#888"/><path d="M3 13l3-5 3 0 1-4 5-2" fill="none" stroke="#b02838" stroke-width="1.400"/></svg><span class="ml-1 mt-px">Simulation</span></div>
        <div class="w-[115px] flex items-center pl-[4px] border-r border-b border-[#a0a0a0]"><svg width="16" height="16"><circle cx="8" cy="8" r="7.500" fill="#62b830"/><path d="M1 7a7 7 0 0 1 14 0q-7 3-14 0z" fill="#8ad050"/><path d="M4.500 8l2.700 2.700L12 5.500" fill="none" stroke="#fff" stroke-width="2.400"/></svg><span class="ml-[4px] mt-px">Validation status</span></div>
        <div class="flex-1 flex justify-end gap-2 pt-[4px] pr-[6px] border-b border-[#a0a0a0]"><svg class="mt-px" width="16" height="14"><path d="M1.500 3.500h11v9h-11z" fill="#f4f8fc" stroke="#a09070"/><path d="M1 3.500h8" stroke="#2878c8" stroke-width="3"/><path d="M6 9l4-4" stroke="#333"/><path d="M8 4l4-3.500 3 2L11 6z" fill="#3c9030" stroke="#206020"/></svg><svg width="10" height="6"><path d="M.8.500h8.400L5 4.800z" fill="#fff" stroke="#666"/></svg><svg width="10" height="4"><use href="#min"/></svg><svg width="10" height="10"><use href="#max"/></svg></div>
      </div>
      <div class="flex-1 min-h-0 border-x-2 border-t-2 border-b-2 border-[#99b4d1] flex flex-col bg-white overflow-hidden">
        <div class="h-[30px] shrink-0 flex items-center pl-[4px] bg-linear-to-b from-white to-[#e1e8f3] border-b border-[#a9c1db]"><svg width="16" height="10"><use href="#pool"/></svg><b class="ml-[5px] text-[15px] text-[#1d4a80] tracking-[-0.5px]">Pool</b></div>
        <div class="h-[151px] flex overflow-hidden">
          <div class="w-[87px] flex flex-col bg-[#f0f0f0]">
            <div class="h-[11px] shrink-0 border-r border-b border-[#a0a0a0]"></div>
            <div class="h-[21px] shrink-0 bg-white flex items-center pl-[7px] font-bold tracking-[-0.3px]">Color &amp; font</div>
            <div class="h-[23px] shrink-0 bg-linear-to-b from-[#dadacd] to-[#c6c6b6] border-y border-r border-[#a0a0a0] flex items-center pl-[7px] pb-px">Grid</div>
            <div class="flex-1 border-r border-[#a0a0a0]"></div>
          </div>
          <div class="flex-1 flex flex-col pl-[7px] pt-[8px]">
            <div class="w-[219px] h-[114px] shrink-0 border border-[#d5dfe5] rounded-[4px] pl-[7px] pt-[13px] flex flex-col">
              <div class="ml-px w-[93px] h-[23px] rounded-[3px] border border-[#3c7fb1] shadow-[inset_0_0_0_1px_#42d0fa] bg-linear-to-b from-[#eef7fc] from-50% to-[#b9dff4] to-50% flex items-center justify-center tracking-[-0.3px]">Choose a font...</div>
              <div class="flex mt-[6px]">
                <div class="w-[162px] h-[23px] rounded-[2px] border border-[#707070] bg-linear-to-b from-[#f2f2f2] to-[#d0d0d0] flex items-center justify-between pl-[3px] pr-1">Segoe UI<svg width="8" height="4"><use href="#caret"/></svg></div>
                <div class="w-[41px] h-[23px] rounded-[2px] border border-[#707070] bg-linear-to-b from-[#f2f2f2] to-[#d0d0d0] flex items-center justify-between pl-[2px] pr-1">9<svg width="8" height="4"><use href="#caret"/></svg></div>
              </div>
              <div class="flex mt-[11px] ml-[6px] font-['Liberation_Serif'] text-[16px] text-[#30609a]">
                <div class="w-[26px] h-[24px] rounded-[3px] border border-[#707070] bg-linear-to-b from-[#f2f2f2] to-[#d0d0d0] flex items-center justify-center font-bold pt-px">B</div>
                <div class="ml-[7px] w-[26px] h-[24px] rounded-[3px] border border-[#707070] bg-linear-to-b from-[#f2f2f2] to-[#d0d0d0] flex items-center justify-center italic pt-px [-webkit-text-stroke:0.3px]">I</div>
                <div class="ml-[12px] w-[26px] h-[24px] rounded-[3px] border border-[#707070] bg-linear-to-b from-[#f2f2f2] to-[#d0d0d0] flex flex-col items-center pt-[5px] font-bold leading-[12px] text-[15px]">A<i class="w-[15px] h-[3px] bg-black"></i></div>
                <div class="ml-[12px] w-[26px] h-[24px] rounded-[3px] border border-[#707070] bg-linear-to-b from-[#f2f2f2] to-[#d0d0d0] flex items-center justify-center"><svg width="16" height="16"><path d="M0 12.500h16v3H0z" fill="#b0b0b0"/><path d="M0 11.500q4 0 6-1" stroke="#4a78b0" fill="none" stroke-width="1.500"/><path d="M7 12q-1-3 2-6l5-5 1.500 1L12.500 9q-1 3-5.500 3z" fill="#5a88bd" stroke="#38628f" stroke-width=".7"/></svg></div>
                <div class="ml-[7px] w-[26px] h-[24px] rounded-[3px] border border-[#707070] bg-linear-to-b from-[#f2f2f2] to-[#d0d0d0] flex items-center justify-center"><svg width="16" height="16"><path d="M1 12h14v3H1z" fill="#fff"/><path d="M1.500 7.500l6-5 5 5-6 5z" fill="#e4e8ee" stroke="#556"/><path d="M6 7V2q2-2 3 1" fill="none" stroke="#445"/><path d="M9 4q6-1 5.500 8-2-1-2.500-4.500z" fill="#3a70b0"/></svg></div>
              </div>
            </div>
            <div class="flex items-start mt-[10px] -ml-[2px] h-[20px]"><span class="w-[108px] mt-[4px] leading-[15px] tracking-[-0.35px]">Apply same style as</span>
              <div class="w-[226px] h-[23px] rounded-[2px] border border-[#707070] bg-linear-to-b from-[#f2f2f2] to-[#d0d0d0] flex items-center justify-between pl-[3px] pr-1 tracking-[-0.3px]">Choose an existing figure...<svg width="8" height="4"><use href="#caret"/></svg></div></div>
          </div>
          <div class="w-4 flex flex-col items-center bg-[#f0f0f0]">
            <div class="h-[20px] flex items-center"><svg width="8" height="5"><use href="#up"/></svg></div>
            <div class="w-[15px] h-[106px] border border-[#8e8e8e] rounded-[2px] bg-linear-to-r from-[#f5f5f5] via-[#e4e4e6] to-[#bdbdc0] flex items-center justify-center"><svg width="8" height="8"><use href="#grip"/></svg></div>
            <div class="flex-1"></div>
            <div class="h-[17px] flex items-center"><svg width="8" height="5"><use href="#down"/></svg></div>
          </div>
        </div>
      </div>
    </section>
  </div>
</div>
</body>
</html>
